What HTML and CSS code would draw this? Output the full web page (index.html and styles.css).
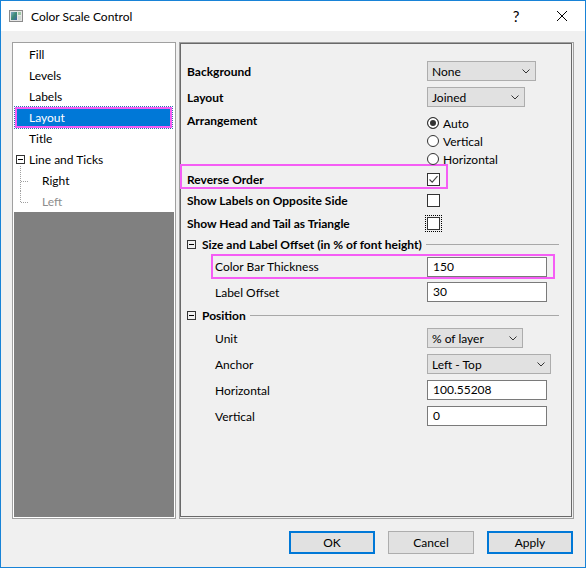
FILE: index.html
```html
<html>
  <head>
    <title>Color Scale Control</title>
    <link rel="stylesheet" href="styles.css">
  </head>
  <body>
    <div class="window">
      <div class="titlebar">
        <svg class="app-icon" width="14" height="12" viewBox="0 0 14 12">
          <defs>
            <linearGradient id="ig" x1="0" y1="0" x2="1" y2="1">
              <stop offset="0" stop-color="#7fa8c9"/>
              <stop offset="0.5" stop-color="#3d8a72"/>
              <stop offset="1" stop-color="#3f63a6"/>
            </linearGradient>
          </defs>
          <rect x="0.5" y="0.5" width="13" height="11" fill="#e6e6e6" stroke="#8a8a8a"/>
          <rect x="2" y="2" width="6" height="8" fill="url(#ig)"/>
          <rect x="9" y="2" width="3" height="3" fill="#9cc7a4"/>
          <rect x="9" y="6" width="3" height="4" fill="#cfd9d3"/>
        </svg>
        <span class="title">Color Scale Control</span>
        <span class="tb-btn help">?</span>
        <span class="tb-btn close">
          <svg width="10" height="10" viewBox="0 0 10 10"><path d="M0 0L10 10M10 0L0 10" stroke="#000" stroke-width="1"/></svg>
        </span>
      </div>

      <div class="main">
        <div class="panes">
          <div class="tree">
            <ul class="tree-list">
              <li class="node">Fill</li>
              <li class="node">Levels</li>
              <li class="node">Labels</li>
              <li class="node selected">Layout</li>
              <li class="node">Title</li>
              <li class="node parent"><span class="toggle tree-toggle"></span>Line and Ticks</li>
              <li class="node child">Right</li>
              <li class="node child last disabled">Left</li>
            </ul>
            <div class="tree-empty"></div>
          </div>

          <div class="page">
            <div class="page-inner">
              <div class="field">
                <span class="field-label bold">Background</span>
                <div class="combo combo-bg">None
                  <svg width="8" height="5" viewBox="0 0 8 5"><path d="M0.5 0.5L4 4L7.5 0.5" fill="none" stroke="#333"/></svg>
                </div>
              </div>
              <div class="field spaced">
                <span class="field-label bold">Layout</span>
                <div class="combo combo-layout">Joined
                  <svg width="8" height="5" viewBox="0 0 8 5"><path d="M0.5 0.5L4 4L7.5 0.5" fill="none" stroke="#333"/></svg>
                </div>
              </div>
              <div class="field arrangement">
                <span class="field-label bold">Arrangement</span>
                <div class="radio-list">
                  <div class="radio"><span class="radio-dot on"></span>Auto</div>
                  <div class="radio"><span class="radio-dot"></span>Vertical</div>
                  <div class="radio"><span class="radio-dot"></span>Horizontal</div>
                </div>
              </div>
              <div class="field marked reverse">
                <span class="field-label bold">Reverse Order</span>
                <span class="check">
                  <svg width="11" height="11" viewBox="0 0 11 11"><path d="M1.5 5.5L4.2 8.2L9.5 2.2" fill="none" stroke="#444" stroke-width="1.1"/></svg>
                </span>
              </div>
              <div class="field opposite">
                <span class="field-label bold">Show Labels on Opposite Side</span>
                <span class="check"></span>
              </div>
              <div class="field triangle">
                <span class="field-label bold">Show Head and Tail as Triangle</span>
                <span class="check focus"></span>
              </div>

              <div class="group-head">
                <span class="toggle"></span>
                <span class="group-title">Size and Label Offset (in % of font height)</span>
                <span class="group-line"></span>
              </div>
              <div class="field sub marked thickness">
                <span class="field-label">Color Bar Thickness</span>
                <div class="textbox">150</div>
              </div>
              <div class="field sub tall">
                <span class="field-label">Label Offset</span>
                <div class="textbox">30</div>
              </div>

              <div class="group-head">
                <span class="toggle"></span>
                <span class="group-title">Position</span>
                <span class="group-line"></span>
              </div>
              <div class="field sub tall">
                <span class="field-label">Unit</span>
                <div class="combo combo-unit">% of layer
                  <svg width="8" height="5" viewBox="0 0 8 5"><path d="M0.5 0.5L4 4L7.5 0.5" fill="none" stroke="#333"/></svg>
                </div>
              </div>
              <div class="field sub tall">
                <span class="field-label">Anchor</span>
                <div class="combo combo-anchor">Left - Top
                  <svg width="8" height="5" viewBox="0 0 8 5"><path d="M0.5 0.5L4 4L7.5 0.5" fill="none" stroke="#333"/></svg>
                </div>
              </div>
              <div class="field sub tall">
                <span class="field-label">Horizontal</span>
                <div class="textbox">100.55208</div>
              </div>
              <div class="field sub tall">
                <span class="field-label">Vertical</span>
                <div class="textbox">0</div>
              </div>
            </div>
          </div>
        </div>

        <div class="buttons">
          <div class="btn default">OK</div>
          <div class="btn">Cancel</div>
          <div class="btn default">Apply</div>
        </div>
      </div>
    </div>
  </body>
</html>
```

FILE: styles.css
```css
* {box-sizing: border-box;}
body {
  margin: 0;
  font: 12px Lato, "Liberation Sans", sans-serif;
  color: #000;
}
.window {
  width: 586px;
  height: 568px;
  border: 1px solid #1883d7;
  background: #f0f0f0;
  display: flex;
  flex-direction: column;
}

/* title bar */
.titlebar {
  height: 30px;
  flex: none;
  background: #fff;
  display: flex;
  align-items: center;
}
.app-icon {margin-left: 8px;}
.title {margin-left: 8px; flex: 1;}
.tb-btn {
  width: 46px;
  height: 30px;
  display: flex;
  align-items: center;
  justify-content: center;
}
.help {font-size: 15px;}

.main {padding: 11px 11px 0 11px;}
.panes {
  display: flex;
  gap: 3px;
  height: 477px;
}

/* tree */
.tree {
  width: 164px;
  flex: none;
  border: 1px solid #a0a0a0;
  padding: 1px;
  background: #fff;
  display: flex;
  flex-direction: column;
}
.tree-list {margin: 0; padding: 0; list-style: none;}
.tree-empty {flex: 1; background: #808080;}
.node {
  height: 21px;
  line-height: 21px;
  padding-left: 15px;
  white-space: nowrap;
}
.node.selected {
  margin: 0 2px 0 1px;
  border: 2px solid #f55df5;
  background: #0078d7;
  color: #fff;
  line-height: 17px;
  padding-left: 12px;
  outline: 1px dotted #2f6fb0;
}
.node.parent {
  display: flex;
  align-items: center;
  padding-left: 2px;
}
.tree-toggle {border-color: #919191; margin-right: 4px;}
.node.child {padding-left: 28px; position: relative;}
.node.child::before {
  content: "";
  position: absolute;
  left: 6px;
  top: -4px;
  height: calc(100% + 4px);
  border-left: 1px dotted #a0a0a0;
}
.node.child.last::before {top: 0; height: 50%;}
.node.child::after {
  content: "";
  position: absolute;
  left: 7px;
  top: 50%;
  width: 7px;
  border-top: 1px dotted #a0a0a0;
}
.node.disabled {color: #8d8d8d;}

.toggle {
  width: 9px;
  height: 9px;
  flex: none;
  border: 1px solid #333;
  display: flex;
  align-items: center;
  justify-content: center;
}
.toggle::after {
  content: "";
  width: 5px;
  height: 1px;
  background: #000;
}

/* property page */
.page {
  flex: 1;
  border: 1px solid #a0a0a0;
  padding: 0 1px 1px 0;
}
.page-inner {
  height: 100%;
  border: 1px solid #696969;
  padding-top: 17px;
}
.field {
  display: flex;
  align-items: center;
  height: 20px;
  padding-left: 6px;
}
.field-label {width: 240px; flex: none; white-space: nowrap;}
.bold {font-weight: 700;}
.field.spaced {margin-top: 6px;}
.field.arrangement {
  height: auto;
  align-items: flex-start;
  margin-top: 7px;
}
.arrangement .field-label {line-height: 14px;}
.radio-list {display: flex; flex-direction: column;}
.radio {
  height: 18px;
  display: flex;
  align-items: center;
  gap: 4px;
}
.radio-dot {
  width: 12px;
  height: 12px;
  border: 1px solid #333;
  border-radius: 50%;
  background: #fff;
}
.radio-dot.on {background: #333; box-shadow: inset 0 0 0 2px #fff;}

.field.marked {border: 2px solid #f55df5;}
.field.reverse {
  margin-top: -4px;
  margin-left: -1px;
  width: 268px;
  height: 25px;
  padding: 6px 0 0 5px;
}
.field.opposite {height: 23px;}
.field.triangle {height: 22px;}

.check {
  width: 13px;
  height: 13px;
  border: 1px solid #333;
  background: #fff;
  display: flex;
  align-items: center;
  justify-content: center;
}
.check.focus {outline: 1px dotted #000; outline-offset: 1px;}

.group-head {
  display: flex;
  align-items: center;
  height: 20px;
  padding-left: 6px;
}
.group-title {font-weight: 700; margin-left: 6px; white-space: nowrap;}
.group-line {
  flex: 1;
  border-top: 1px solid #a8a8a8;
  margin: 0 12px 0 4px;
}

.field.sub {padding-left: 34px;}
.field.sub .field-label {width: 212px;}
.field.sub.tall {height: 26px;}
.field.thickness {
  margin-left: 30px;
  width: 344px;
  height: 25px;
  padding-left: 2px;
}

.combo {
  height: 20px;
  border: 1px solid #adadad;
  background: #e1e1e1;
  display: flex;
  align-items: center;
  justify-content: space-between;
  padding: 0 5px 0 4px;
}
.combo-bg {width: 109px;}
.combo-layout {width: 98px;}
.combo-unit {width: 96px;}
.combo-anchor {width: 124px;}
.textbox {
  width: 120px;
  height: 20px;
  border: 1px solid #7a7a7a;
  background: #fff;
  line-height: 18px;
  padding-left: 5px;
}

/* dialog buttons */
.buttons {
  display: flex;
  justify-content: flex-end;
  gap: 13px;
  margin-top: 12px;
  padding-right: 1px;
}
.btn {
  width: 86px;
  height: 23px;
  border: 1px solid #adadad;
  background: #e1e1e1;
  display: flex;
  align-items: center;
  justify-content: center;
}
.btn.default {border: 2px solid #0078d7;}
```
